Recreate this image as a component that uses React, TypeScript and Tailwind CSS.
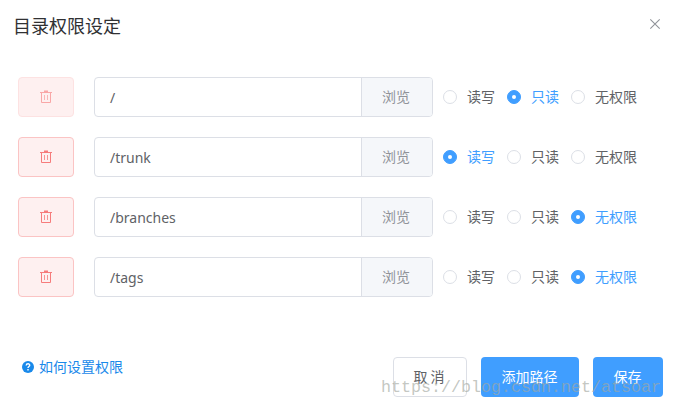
type Permission = '读写' | '只读' | '无权限';

const permissions: Permission[] = ['读写', '只读', '无权限'];

const rows: { path: string; value: Permission; locked?: boolean }[] = [
  { path: '/', value: '只读', locked: true },
  { path: '/trunk', value: '读写' },
  { path: '/branches', value: '无权限' },
  { path: '/tags', value: '无权限' },
];

function TrashIcon() {
  return (
    <svg width="14" height="14" viewBox="0 0 14 14" fill="none" stroke="currentColor" strokeWidth="1">
      <path d="M1 2.5h12M2.5 2.5v10h9v-10" />
      <path d="M5.5 5v5M8.5 5v5" opacity="0.8" />
      <path d="M5 1.3h4" strokeWidth="1.6" />
    </svg>
  );
}

function Radio({ label, checked }: { label: Permission; checked: boolean }) {
  return (
    <label className="flex items-center">
      <span
        className={`flex size-3.5 items-center justify-center rounded-full border ${
          checked ? 'border-[#409eff] bg-[#409eff]' : 'border-[#dcdfe6] bg-white'
        }`}
      >
        {checked && <span className="size-1 rounded-full bg-white" />}
      </span>
      <span className={`pb-0.5 pl-2.5 leading-5 ${checked ? 'text-[#409eff]' : 'text-[#606266]'}`}>{label}</span>
    </label>
  );
}

function PathRow({ path, value, locked }: { path: string; value: Permission; locked?: boolean }) {
  return (
    <div className="flex h-10 items-center">
      <button
        disabled={locked}
        aria-label="删除"
        className={`flex h-10 w-14 items-center justify-center rounded border bg-[#fef0f0] ${
          locked ? 'border-[#fde2e2] text-[#f9a7a7]' : 'border-[#fbc4c4] text-[#f67c7c]'
        }`}
      >
        <TrashIcon />
      </button>
      <div className="ml-5 flex h-10 w-[339px] overflow-hidden rounded border border-[#dcdfe6]">
        <div className="flex flex-1 items-center pl-[15px] pt-px font-['Noto_Sans'] text-[#606266]">{path}</div>
        <button className="w-[71px] border-l border-[#dcdfe6] bg-[#f5f7fa] pb-0.5 pr-0.5 text-[#909399]">浏览</button>
      </div>
      <div className="ml-2.5 flex gap-3">
        {permissions.map((p) => (
          <Radio key={p} label={p} checked={p === value} />
        ))}
      </div>
    </div>
  );
}

export default function App() {
  return (
    <div className="relative flex h-[408px] w-[673px] flex-col overflow-hidden bg-white font-['Noto_Sans_CJK_SC',sans-serif] text-sm">
      <header className="flex h-[77px] items-start justify-between pl-[13px] pr-3 pt-[13px]">
        <h1 className="text-lg leading-6 text-[#303133]">目录权限设定</h1>
        <button aria-label="关闭" className="pt-[5px] text-[#909399]">
          <svg width="12" height="12" viewBox="0 0 12 12" stroke="currentColor" strokeWidth="1.1">
            <path d="M1.3 1.3l9.4 9.4M10.7 1.3l-9.4 9.4" />
          </svg>
        </button>
      </header>
      <main className="flex flex-col gap-5 pl-[18px]">
        {rows.map((row) => (
          <PathRow key={row.path} {...row} />
        ))}
      </main>
      <footer className="mt-[60px] flex justify-between pl-[22px] pr-2.5">
        <a className="flex h-5 items-center gap-[5px] text-[#1989ea]">
          <svg width="12" height="12" viewBox="0 0 12 12">
            <circle cx="6" cy="6" r="6" fill="#1989ea" />
            <path d="M4.2 4.5C4.3 2.2 7.9 2.3 7.7 4.4C7.6 5.5 6 5.5 6 7" fill="none" stroke="white" strokeWidth="1.4" />
            <path d="M5.3 8h1.4v1.4H5.3z" fill="white" />
          </svg>
          <span className="pb-0.5">如何设置权限</span>
        </a>
        <div className="flex gap-3.5">
          <button className="h-10 w-[74px] rounded border border-[#dcdfe6] pb-0.5 pr-0.5 text-[#606266]">取 消</button>
          <button className="h-10 w-[98px] rounded bg-[#409eff] pb-0.5 pr-px text-white">添加路径</button>
          <button className="h-10 w-[70px] rounded bg-[#409eff] pb-0.5 pr-px text-white">保存</button>
        </div>
      </footer>
      <div className="pointer-events-none absolute left-[381px] top-[378px] whitespace-nowrap font-['Liberation_Mono',monospace] text-[16.67px] leading-5 text-[#a3a89f]/65">
        https://blog.csdn.net/atsoar
      </div>
    </div>
  );
}
